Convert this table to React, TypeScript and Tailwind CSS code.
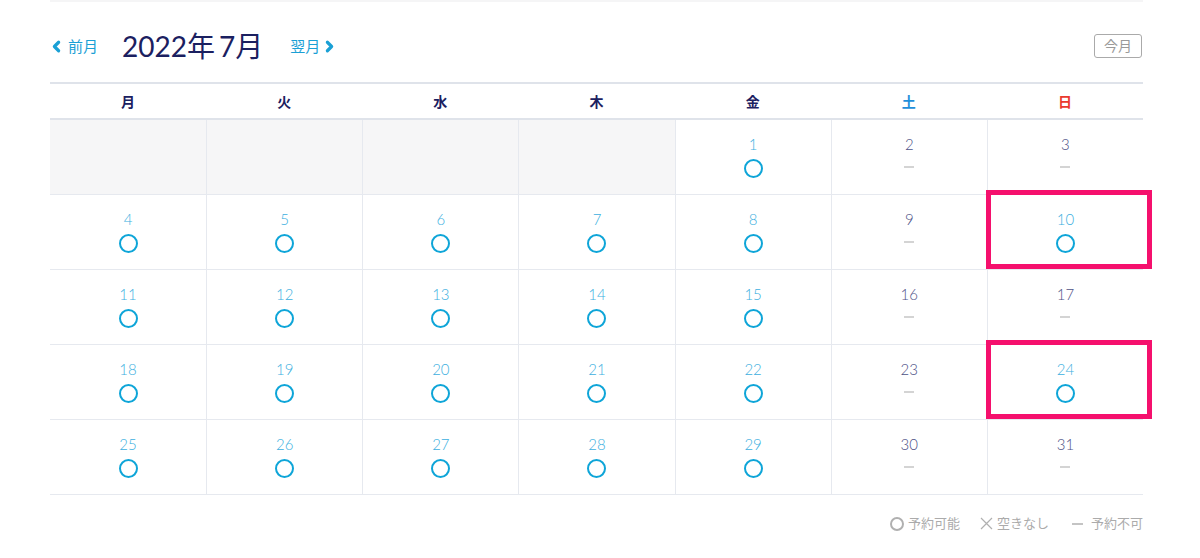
import { ChevronLeft, ChevronRight } from 'lucide-react';

const WEEK = [
  { label: '月', cls: 'text-[#1b2060]' },
  { label: '火', cls: 'text-[#1b2060]' },
  { label: '水', cls: 'text-[#1b2060]' },
  { label: '木', cls: 'text-[#1b2060]' },
  { label: '金', cls: 'text-[#1b2060]' },
  { label: '土', cls: 'text-[#1f8fdb]' },
  { label: '日', cls: 'text-[#ea3a2e]' },
];

// July 2022 starts on a Friday
const CELLS: (number | null)[] = [null, null, null, null, ...Array.from({ length: 31 }, (_, i) => i + 1)];
const HIGHLIGHT = [10, 24];

function isOpen(day: number, col: number) {
  if (col < 5) return true;
  return HIGHLIGHT.includes(day);
}

function DayCell({ day, col }: { day: number | null; col: number }) {
  const base = `relative h-[75px] border-b border-[#e6e9ef] ${col > 0 ? 'border-l' : ''}`;
  if (day === null) return <div className={`${base} bg-[#f6f6f7]`} />;
  const open = isOpen(day, col);
  return (
    <div className={`${base} flex flex-col items-center`}>
      <span className={`mt-4 h-4 leading-4 text-[15px] font-light ${open ? 'text-[#3cafe0]' : 'text-[#4d5186]'}`}>{day}</span>
      {open ? (
        <span className="mt-[7px] w-[19px] h-[19px] rounded-full border-2 border-[#0ea5d8]" />
      ) : (
        <span className="mt-[14px] w-[10px] h-[2px] bg-[#d4d4d4]" />
      )}
      {HIGHLIGHT.includes(day) && (
        <div className="absolute -top-[5px] -left-[2px] -right-[9px] bottom-0 border-[5px] border-[#f5106d]" />
      )}
    </div>
  );
}

export default function App() {
  const rows = [];
  for (let i = 0; i < CELLS.length; i += 7) rows.push(CELLS.slice(i, i + 7));

  return (
    <div className="w-[1200px] h-[558px] bg-white font-['Lato','Noto_Sans_CJK_JP',sans-serif] overflow-hidden">
      <div className="ml-[50px] w-[1093px] h-[2px] bg-[#f5f5f6]" />
      <div className="ml-[50px] w-[1093px]">
        <div className="flex items-center h-[80px] pt-[8px]">
          <button className="flex items-center text-[#1aa0d5] text-[15px]">
            <ChevronLeft size={17} strokeWidth={4.5} className="-ml-[2px] mr-[3px]" />
            前月
          </button>
          <h1 className="ml-[24px] text-[28px] text-[#1b2060] font-normal">2022年<span className="ml-[4px]">7月</span></h1>
          <button className="ml-[27px] flex items-center text-[#1aa0d5] text-[15px]">
            翌月
            <ChevronRight size={17} strokeWidth={4.5} className="ml-[1px]" />
          </button>
          <button className="ml-auto mr-[1px] w-[48px] h-[24px] border border-[#aaaaaa] rounded-[3px] text-[#9a9a9a] text-[14px] leading-none">
            今月
          </button>
        </div>

        <div className="border-t-2 border-[#dfe3ea]">
          <div className="grid grid-cols-7 h-[36px] border-b-2 border-[#dfe3ea]">
            {WEEK.map((w) => (
              <div key={w.label} className={`flex items-center justify-center text-[14px] font-bold ${w.cls}`}>
                {w.label}
              </div>
            ))}
          </div>
          {rows.map((r, ri) => (
            <div key={ri} className="grid grid-cols-7">
              {r.map((d, ci) => (
                <DayCell key={ci} day={d} col={ci} />
              ))}
            </div>
          ))}
        </div>

        <div className="flex justify-end items-center mt-[19px] text-[13px] text-[#ababab]">
          <span className="flex items-center gap-[4px]">
            <span className="w-[14px] h-[14px] rounded-full border-2 border-[#b0b0b0]" />
            予約可能
          </span>
          <span className="ml-[20px] flex items-center gap-[4px]">
            <svg width="13" height="13" viewBox="0 0 13 13" className="stroke-[#b0b0b0]">
              <path d="M1 1L12 12M12 1L1 12" strokeWidth="1.2" fill="none" />
            </svg>
            空きなし
          </span>
          <span className="ml-[23px] flex items-center gap-[8px]">
            <span className="w-[11px] h-[2px] bg-[#c4c4c4]" />
            予約不可
          </span>
        </div>
      </div>
    </div>
  );
}
